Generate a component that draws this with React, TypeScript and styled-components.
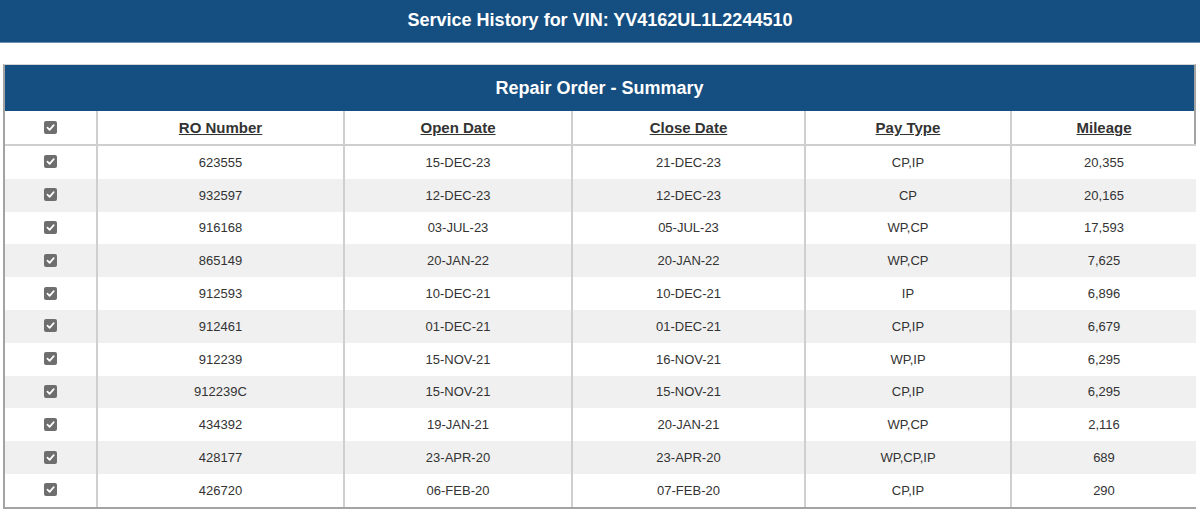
import React from 'react';
import styled, { createGlobalStyle } from 'styled-components';

const GlobalStyle = createGlobalStyle`
  body {
    margin: 0;
    background: #fff;
    font-family: "Liberation Sans", Arial, sans-serif;
  }
`;

const TopBar = styled.div`
  height: 43px;
  background: #154e80;
  color: #fff;
  display: flex;
  align-items: center;
  justify-content: center;
  font-size: 18px;
  font-weight: bold;
  border-bottom: 1px solid #6d8fb0;
  box-sizing: border-box;
  padding-bottom: 2px;
`;

const Panel = styled.div`
  margin: 21px 4px 0 3px;
  border: 2px solid #a3a3a3;
  border-top: 1px solid #d4d4d4;
`;

const PanelTitle = styled.div`
  height: 46px;
  background: #154e80;
  color: #fff;
  display: flex;
  align-items: center;
  justify-content: center;
  font-size: 18px;
  font-weight: bold;
`;

const Table = styled.table`
  width: 100%;
  border-collapse: collapse;
  table-layout: fixed;
`;

const HeadCell = styled.th`
  height: 33px;
  padding: 0;
  text-align: center;
  font-size: 15px;
  font-weight: bold;
  color: #333;
  text-decoration: underline;
  border-left: 2px solid #cfcfcf;
  border-bottom: 2px solid #cfcfcf;
  &:first-child {
    border-left: none;
  }
`;

const Row = styled.tr<{ $alt: boolean }>`
  background: ${(p) => (p.$alt ? '#f0f0f0' : '#fff')};
`;

const Cell = styled.td`
  height: 32.8px;
  padding: 0;
  text-align: center;
  font-size: 13px;
  color: #333;
  border-left: 2px solid #cfcfcf;
  &:first-child {
    border-left: none;
  }
`;

const CheckBox = styled.span`
  display: inline-flex;
  align-items: center;
  justify-content: center;
  width: 13px;
  height: 13px;
  border-radius: 2px;
  background: #6e6e6e;
  vertical-align: middle;
  margin-top: -3px;
`;

const Check = () => (
  <CheckBox>
    <svg width="9" height="9" viewBox="0 0 10 10">
      <path d="M1.6 5.2 L4 7.6 L8.6 2.4" fill="none" stroke="#fff" strokeWidth="1.9" strokeLinecap="round" strokeLinejoin="round" />
    </svg>
  </CheckBox>
);

const orders = [
  ['623555', '15-DEC-23', '21-DEC-23', 'CP,IP', '20,355'],
  ['932597', '12-DEC-23', '12-DEC-23', 'CP', '20,165'],
  ['916168', '03-JUL-23', '05-JUL-23', 'WP,CP', '17,593'],
  ['865149', '20-JAN-22', '20-JAN-22', 'WP,CP', '7,625'],
  ['912593', '10-DEC-21', '10-DEC-21', 'IP', '6,896'],
  ['912461', '01-DEC-21', '01-DEC-21', 'CP,IP', '6,679'],
  ['912239', '15-NOV-21', '16-NOV-21', 'WP,IP', '6,295'],
  ['912239C', '15-NOV-21', '15-NOV-21', 'CP,IP', '6,295'],
  ['434392', '19-JAN-21', '20-JAN-21', 'WP,CP', '2,116'],
  ['428177', '23-APR-20', '23-APR-20', 'WP,CP,IP', '689'],
  ['426720', '06-FEB-20', '07-FEB-20', 'CP,IP', '290'],
];

const columns = ['RO Number', 'Open Date', 'Close Date', 'Pay Type', 'Mileage'];
const widths = [92, 247, 228, 233, 206, 185];

export default function App() {
  return (
    <>
      <GlobalStyle />
      <TopBar>Service History for VIN: YV4162UL1L2244510</TopBar>
      <Panel>
        <PanelTitle>Repair Order - Summary</PanelTitle>
        <Table>
          <colgroup>
            {widths.map((w, i) => (
              <col key={i} style={{ width: w }} />
            ))}
          </colgroup>
          <thead>
            <tr>
              <HeadCell>
                <Check />
              </HeadCell>
              {columns.map((c) => (
                <HeadCell key={c}>{c}</HeadCell>
              ))}
            </tr>
          </thead>
          <tbody>
            {orders.map((o, i) => (
              <Row key={o[0]} $alt={i % 2 === 1}>
                <Cell>
                  <Check />
                </Cell>
                {o.map((v, j) => (
                  <Cell key={j}>{v}</Cell>
                ))}
              </Row>
            ))}
          </tbody>
        </Table>
      </Panel>
    </>
  );
}
